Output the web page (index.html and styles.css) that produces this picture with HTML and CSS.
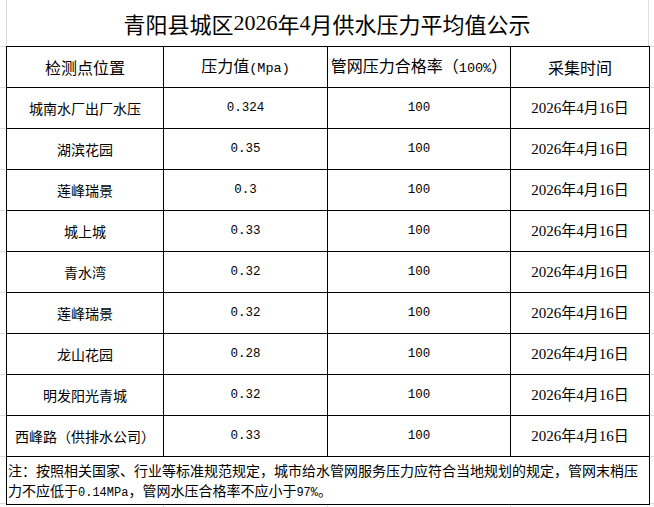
FILE: index.html
```html
<!DOCTYPE html>
<html lang="zh-CN">
<head>
<meta charset="utf-8">
<title>青阳县城区2026年4月供水压力平均值公示</title>
<link rel="stylesheet" href="styles.css">
</head>
<body>
<div class="sheet">
  <div class="title">青阳县城区<span class="serif">2026</span>年<span class="serif">4</span>月供水压力平均值公示</div>
  <table class="data">
    <colgroup>
      <col class="c1"><col class="c2"><col class="c3"><col class="c4">
    </colgroup>
    <thead>
      <tr>
        <th>检测点位置</th>
        <th>压力值<span class="lat">(Mpa)</span></th>
        <th>管网压力合格率（<span class="lat">100%</span>）</th>
        <th>采集时间</th>
      </tr>
    </thead>
    <tbody>
      <tr><td>城南水厂出厂水压</td><td class="num">0.324</td><td class="num">100</td><td class="date">2026年4月16日</td></tr>
      <tr><td>湖滨花园</td><td class="num">0.35</td><td class="num">100</td><td class="date">2026年4月16日</td></tr>
      <tr><td>莲峰瑞景</td><td class="num">0.3</td><td class="num">100</td><td class="date">2026年4月16日</td></tr>
      <tr><td>城上城</td><td class="num">0.33</td><td class="num">100</td><td class="date">2026年4月16日</td></tr>
      <tr><td>青水湾</td><td class="num">0.32</td><td class="num">100</td><td class="date">2026年4月16日</td></tr>
      <tr><td>莲峰瑞景</td><td class="num">0.32</td><td class="num">100</td><td class="date">2026年4月16日</td></tr>
      <tr><td>龙山花园</td><td class="num">0.28</td><td class="num">100</td><td class="date">2026年4月16日</td></tr>
      <tr><td>明发阳光青城</td><td class="num">0.32</td><td class="num">100</td><td class="date">2026年4月16日</td></tr>
      <tr><td>西峰路（供排水公司）</td><td class="num">0.33</td><td class="num">100</td><td class="date">2026年4月16日</td></tr>
      <tr class="note-row"><td colspan="4" class="note">注：按照相关国家、行业等标准规范规定，城市给水管网服务压力应符合当地规划的规定，管网末梢压力不应低于<span class="lat-s">0.14MPa</span>，管网水压合格率不应小于<span class="lat-s">97%</span>。</td></tr>
    </tbody>
  </table>
</div>
</body>
</html>
```

FILE: styles.css
```css
html, body {
  margin: 0;
  padding: 0;
}

body {
  width: 654px;
  height: 507px;
  overflow: hidden;
  color: #000;
  font-family: "Noto Sans CJK SC", "Noto Sans", sans-serif;
  background-color: #fff;
  background-image:
    repeating-linear-gradient(to bottom, #dcdcdc 0 1px, transparent 1px 41px),
    linear-gradient(#dcdcdc, #dcdcdc),
    linear-gradient(#dcdcdc, #dcdcdc),
    linear-gradient(#dcdcdc, #dcdcdc),
    linear-gradient(#dcdcdc, #dcdcdc),
    linear-gradient(#dcdcdc, #dcdcdc),
    linear-gradient(#dcdcdc, #dcdcdc);
  background-repeat: no-repeat;
  background-size:
    100% 411px,
    100% 1px,
    1px 46px,
    1px 46px,
    1px 10px,
    1px 10px,
    1px 10px;
  background-position:
    0 46px,
    0 503px,
    6px 0,
    648px 0,
    163px 503px,
    327px 503px,
    510px 503px;
}

.sheet {
  display: flex;
  flex-direction: column;
}

.title {
  height: 46px;
  display: flex;
  align-items: center;
  justify-content: center;
  font-size: 22px;
  line-height: 26px;
}

.serif {
  font-family: "Liberation Serif", serif;
}

.data {
  margin-left: 6px;
  width: 643px;
  border-collapse: collapse;
  table-layout: fixed;
  background: #fff;
}

.c1 { width: 157px; }
.c2 { width: 164px; }
.c3 { width: 183px; }
.c4 { width: 139px; }

.data th,
.data td {
  border: 1px solid #000;
  height: 40px;
  padding: 0;
  text-align: center;
  vertical-align: middle;
  white-space: nowrap;
}

.data th {
  font-weight: normal;
  font-size: 16px;
  line-height: 20px;
}

.data td {
  font-size: 14px;
  line-height: 18px;
}

.lat {
  font-family: "Liberation Mono", monospace;
  font-size: 13.5px;
}

.data td.num {
  font-family: "Liberation Mono", monospace;
  font-size: 12.5px;
}

.data td.date {
  font-family: "Liberation Serif", "Noto Sans CJK SC", serif;
  font-size: 15px;
}

.data td.note {
  height: 46px;
  text-align: left;
  white-space: normal;
  padding: 0 0 1px 1px;
  font-size: 14px;
  line-height: 20px;
}

.lat-s {
  font-family: "Liberation Mono", monospace;
  font-size: 12px;
  line-height: 16px;
}
```
